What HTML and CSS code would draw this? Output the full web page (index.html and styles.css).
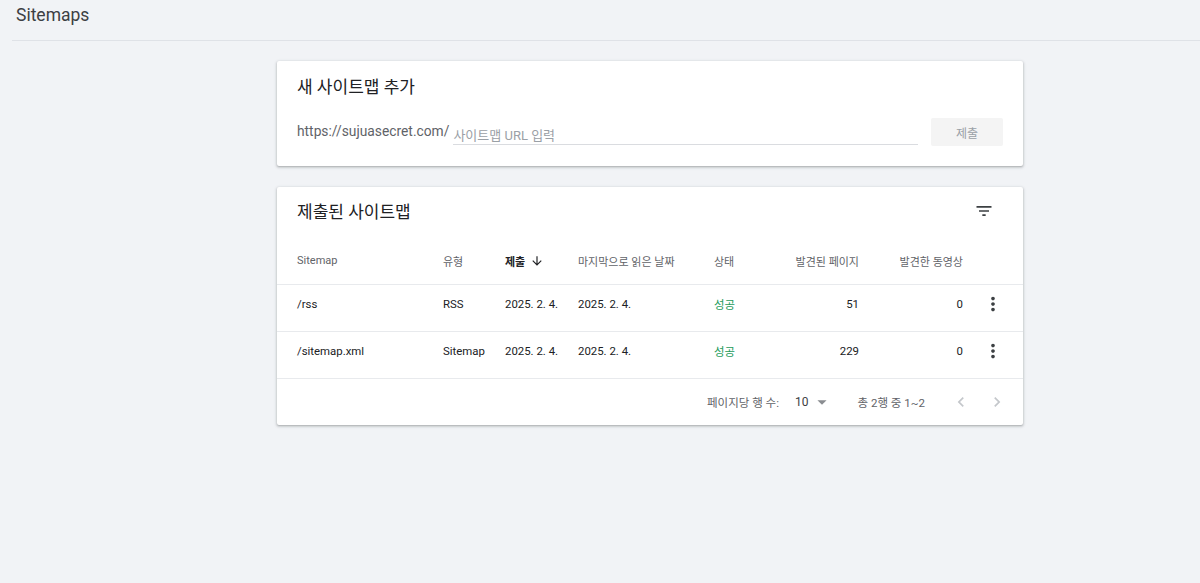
FILE: index.html
```html
<!DOCTYPE html>
<html lang="ko">
<head>
    <meta charset="UTF-8">
    <meta name="viewport" content="width=device-width, initial-scale=1.0">
    <title>Sitemaps</title>
    <link rel="stylesheet" href="styles.css">
</head>
<body>
    <div class="page-header">
        <h1>Sitemaps</h1>
    </div>

    <div class="content">
        <!-- 새 사이트맵 추가 -->
        <div class="card add-card">
            <h2>새 사이트맵 추가</h2>
            <div class="add-row">
                <span class="prefix">https://sujuasecret.com/</span>
                <div class="url-field">
                    <input type="text" placeholder="사이트맵 URL 입력">
                </div>
                <button class="submit-btn" disabled>제출</button>
            </div>
        </div>

        <!-- 제출된 사이트맵 -->
        <div class="card list-card">
            <div class="list-title">
                <h2>제출된 사이트맵</h2>
                <span class="icon-btn">
                    <svg viewBox="0 0 24 24" width="20" height="20"><path fill="#3c4043" d="M10 18h4v-2h-4v2zM3 6v2h18V6H3zm3 7h12v-2H6v2z"/></svg>
                </span>
            </div>

            <div class="row head">
                <div>Sitemap</div>
                <div>유형</div>
                <div class="sorted">제출
                    <svg viewBox="0 0 24 24" width="14" height="14"><path fill="#202124" d="M20 12l-1.41-1.41L13 16.17V4h-2v12.17l-5.58-5.59L4 12l8 8 8-8z"/></svg>
                </div>
                <div>마지막으로 읽은 날짜</div>
                <div>상태</div>
                <div class="num">발견된 페이지</div>
                <div class="num">발견한 동영상</div>
                <div></div>
            </div>

            <div class="row">
                <div>/rss</div>
                <div>RSS</div>
                <div>2025. 2. 4.</div>
                <div>2025. 2. 4.</div>
                <div class="ok">성공</div>
                <div class="num">51</div>
                <div class="num">0</div>
                <div class="more">
                    <svg viewBox="0 0 24 24" width="22" height="22"><path fill="#3c4043" d="M12 8c1.1 0 2-.9 2-2s-.9-2-2-2-2 .9-2 2 .9 2 2 2zm0 2c-1.1 0-2 .9-2 2s.9 2 2 2 2-.9 2-2-.9-2-2-2zm0 6c-1.1 0-2 .9-2 2s.9 2 2 2 2-.9 2-2-.9-2-2-2z"/></svg>
                </div>
            </div>

            <div class="row">
                <div>/sitemap.xml</div>
                <div>Sitemap</div>
                <div>2025. 2. 4.</div>
                <div>2025. 2. 4.</div>
                <div class="ok">성공</div>
                <div class="num">229</div>
                <div class="num">0</div>
                <div class="more">
                    <svg viewBox="0 0 24 24" width="22" height="22"><path fill="#3c4043" d="M12 8c1.1 0 2-.9 2-2s-.9-2-2-2-2 .9-2 2 .9 2 2 2zm0 2c-1.1 0-2 .9-2 2s.9 2 2 2 2-.9 2-2-.9-2-2-2zm0 6c-1.1 0-2 .9-2 2s.9 2 2 2 2-.9 2-2-.9-2-2-2z"/></svg>
                </div>
            </div>

            <div class="pager">
                <span>페이지당 행 수:</span>
                <span class="per-page">10
                    <svg viewBox="0 0 24 24" width="22" height="22"><path fill="#8a8d91" d="M7 10l5 5 5-5z"/></svg>
                </span>
                <span class="range">총 2행 중 1~2</span>
                <span class="nav">
                    <svg viewBox="0 0 24 24" width="20" height="20"><path fill="#c4c7cb" d="M15.41 7.41L14 6l-6 6 6 6 1.41-1.41L10.83 12z"/></svg>
                    <svg viewBox="0 0 24 24" width="20" height="20"><path fill="#c4c7cb" d="M10 6L8.59 7.41 13.17 12l-4.58 4.59L10 18l6-6z"/></svg>
                </span>
            </div>
        </div>
    </div>
</body>
</html>
```

FILE: styles.css
```css
body, html {
    margin: 0;
    height: 100%;
    font-family: Roboto, "Noto Sans CJK KR", sans-serif;
    background-color: #f1f3f6;
    color: #202124;
}

.page-header {
    margin-left: 12px;
    height: 41px;
    border-bottom: 1px solid #dfe2e7;
    box-sizing: border-box;
}

.page-header h1 {
    margin: 0;
    padding: 3px 0 0 4px;
    font-size: 17.5px;
    font-weight: 400;
    line-height: 24px;
    color: #3c4043;
}

.content {
    width: 746px;
    margin: 20px 0 0 277px;
}

.card {
    background-color: #fff;
    border-radius: 2px;
    box-shadow: 0 1px 2px rgba(60, 64, 67, 0.3), 0 1px 3px 1px rgba(60, 64, 67, 0.12);
}

.card h2 {
    margin: 0;
    font-size: 17px;
    font-weight: 400;
    line-height: 24px;
    color: #202124;
}

/* 새 사이트맵 추가 */
.add-card {
    height: 105px;
    padding: 14px 20px 0 20px;
    box-sizing: border-box;
}

.add-row {
    display: flex;
    align-items: center;
    margin-top: 18px;
    height: 30px;
}

.prefix {
    font-size: 13.8px;
    color: #5f6368;
    margin-right: 4px;
    padding-bottom: 2px;
}

.url-field {
    flex: 1;
    border-bottom: 1px solid #dadce0;
    margin-right: 13px;
    margin-top: 5px;
}

.url-field input {
    width: 100%;
    border: none;
    outline: none;
    padding: 0 0 1px 0;
    font-family: Roboto, "Noto Sans CJK KR", sans-serif;
    font-size: 13px;
    color: #202124;
    background: transparent;
}

.url-field input::placeholder {
    color: #9aa0a6;
}

.submit-btn {
    width: 72px;
    height: 28px;
    border: none;
    border-radius: 2px;
    background-color: #f4f4f4;
    color: #9aa0a6;
    font-family: Roboto, "Noto Sans CJK KR", sans-serif;
    font-size: 12px;
}

/* 제출된 사이트맵 */
.list-card {
    margin-top: 21px;
}

.list-title {
    display: flex;
    justify-content: space-between;
    align-items: center;
    height: 50px;
    padding: 0 29px 0 20px;
}

.icon-btn {
    display: flex;
    margin-top: -3px;
}

.row {
    display: grid;
    grid-template-columns: 146px 62px 73px 136px 60px 85px 104px 59px;
    align-items: center;
    height: 47px;
    padding: 0 0 8px 20px;
    box-sizing: border-box;
    border-bottom: 1px solid #e8eaed;
    font-size: 11.4px;
    color: #202124;
}

.row.head {
    height: 48px;
    padding-bottom: 0;
    font-size: 11px;
    color: #5f6368;
}

.row .num {
    text-align: right;
}

.sorted {
    display: flex;
    align-items: center;
    gap: 5px;
    font-weight: 700;
    color: #202124;
}

.ok {
    color: #259b5b;
}

.more {
    display: flex;
    justify-content: center;
}

.pager {
    display: flex;
    align-items: center;
    justify-content: flex-end;
    height: 46px;
    padding-right: 16px;
    font-size: 11.5px;
    color: #5f6368;
}

.per-page {
    display: flex;
    align-items: center;
    gap: 3px;
    margin-left: 16px;
    font-size: 12px;
    color: #3c4043;
}

.range {
    margin-left: 24px;
}

.nav {
    display: flex;
    gap: 16px;
    margin-left: 26px;
}
```
